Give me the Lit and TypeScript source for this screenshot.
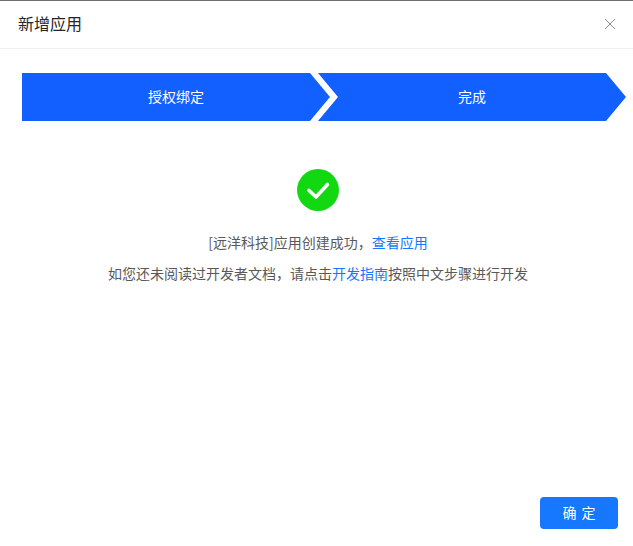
import { LitElement, html, css } from "lit";
import { customElement } from "lit/decorators.js";

@customElement("app-root")
export class AppRoot extends LitElement {
  static styles = css`
    :host {
      display: flex;
      flex-direction: column;
      width: 633px;
      height: 546px;
      box-sizing: border-box;
      border-top: 1px solid #707070;
      background: #fff;
      font-family: "Noto Sans CJK SC", "Liberation Sans", sans-serif;
      color: #595959;
      overflow: hidden;
    }
    .header {
      display: flex;
      align-items: center;
      justify-content: space-between;
      height: 48px;
      box-sizing: border-box;
      padding: 0 17px 0 18px;
      border-bottom: 1px solid #f0f0f0;
    }
    .title {
      font-size: 16px;
      line-height: 22px;
      color: #262626;
      margin-top: -3px;
    }
    .close {
      display: block;
      width: 12px;
      height: 12px;
      margin-top: -1px;
    }
    .steps {
      display: flex;
      margin: 24px 0 0 22px;
    }
    .step {
      flex: none;
      display: flex;
      align-items: center;
      justify-content: center;
      width: 308px;
      height: 48px;
      padding-bottom: 2px;
      box-sizing: border-box;
      background: #1260ff;
      color: #fff;
      font-size: 14px;
      clip-path: polygon(0 0, 288px 0, 308px 24px, 288px 48px, 0 48px);
    }
    .step + .step {
      margin-left: -12px;
      clip-path: polygon(0 0, 288px 0, 308px 24px, 288px 48px, 0 48px, 20px 24px);
    }
    .body {
      flex: 1;
      display: flex;
      flex-direction: column;
      align-items: center;
      padding: 48px 19px 0 22px;
      font-size: 14px;
    }
    .icon {
      display: block;
      width: 42px;
      height: 42px;
    }
    .line {
      line-height: 20px;
      white-space: nowrap;
    }
    .line.first {
      margin-top: 21px;
    }
    .line.second {
      margin-top: 11px;
    }
    a {
      color: #1677ff;
      text-decoration: none;
    }
    .footer {
      display: flex;
      justify-content: flex-end;
      padding: 0 15px 17px 0;
    }
    button {
      width: 78px;
      height: 32px;
      border: 0;
      border-radius: 4px;
      background: #1677ff;
      color: #fff;
      font: inherit;
      font-size: 14px;
      word-spacing: 2px;
      padding: 0 0 3px;
    }
  `;

  render() {
    return html`
      <div class="header">
        <span class="title">新增应用</span>
        <svg class="close" viewBox="0 0 12 12" fill="none" stroke="#8c8c8c" stroke-width="1">
          <path d="M1 1l10 10M11 1L1 11" />
        </svg>
      </div>
      <div class="steps">
        <div class="step">授权绑定</div>
        <div class="step">完成</div>
      </div>
      <div class="body">
        <svg class="icon" viewBox="0 0 42 42">
          <circle cx="21" cy="21" r="21" fill="#12d812" />
          <path d="M12 21.5l7 6.5L30.5 15.5" fill="none" stroke="#fff" stroke-width="3.6" stroke-linecap="round" stroke-linejoin="round" />
        </svg>
        <div class="line first">[远洋科技]应用创建成功，<a>查看应用</a></div>
        <div class="line second">如您还未阅读过开发者文档，请点击<a>开发指南</a>按照中文步骤进行开发</div>
      </div>
      <div class="footer"><button>确 定</button></div>
    `;
  }
}
